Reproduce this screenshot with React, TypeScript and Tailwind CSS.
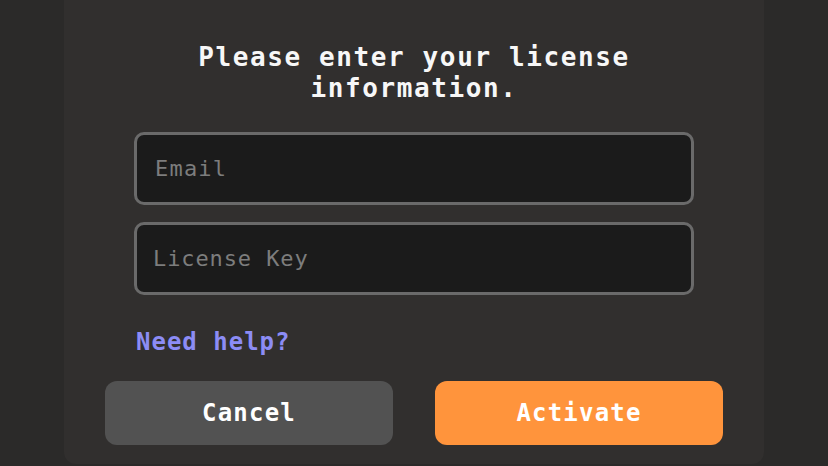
import React from 'react';

const App: React.FC = () => {
  return (
    <div className="min-h-[466px] bg-[#2b2a29] flex justify-center font-['DejaVu_Sans_Mono',monospace]">
      <div className="w-[700px] h-[464px] bg-[#312f2e] rounded-b-[12px] flex flex-col items-center pt-[42px]">
        <h1 className="text-[#f7f7f7] text-[26px] leading-[31px] font-bold tracking-[1.6px] text-center">
          Please enter your license
          <br />
          information.
        </h1>

        <div className="w-[560px] mt-[28px] flex flex-col gap-[17px]">
          <input
            type="email"
            placeholder="Email"
            className="h-[73px] w-full rounded-[10px] border-[3px] border-[#6a6a6a] bg-[#1b1b1b] pl-[18px] text-[22px] tracking-[1.2px] text-[#e5e5e5] placeholder:text-[#7d7d7d] outline-none"
          />
          <input
            type="text"
            placeholder="License Key"
            className="h-[73px] w-full rounded-[10px] border-[3px] border-[#6a6a6a] bg-[#1b1b1b] pl-[16px] text-[22px] tracking-[0.9px] text-[#e5e5e5] placeholder:text-[#7d7d7d] outline-none"
          />
        </div>

        <div className="w-[560px] mt-[32px]">
          <a href="#" className="pl-[2px] text-[24px] leading-[30px] font-bold tracking-[1px] text-[#8c8cf5]">
            Need help?
          </a>
        </div>

        <div className="flex gap-[42px] mt-[24px]">
          <button className="w-[288px] h-[64px] rounded-[12px] bg-[#525252] text-white text-[24px] font-bold tracking-[1.2px]">
            Cancel
          </button>
          <button className="w-[288px] h-[64px] rounded-[12px] bg-[#ff943c] text-white text-[24px] font-bold tracking-[1.2px]">
            Activate
          </button>
        </div>
      </div>
    </div>
  );
};

export default App;
